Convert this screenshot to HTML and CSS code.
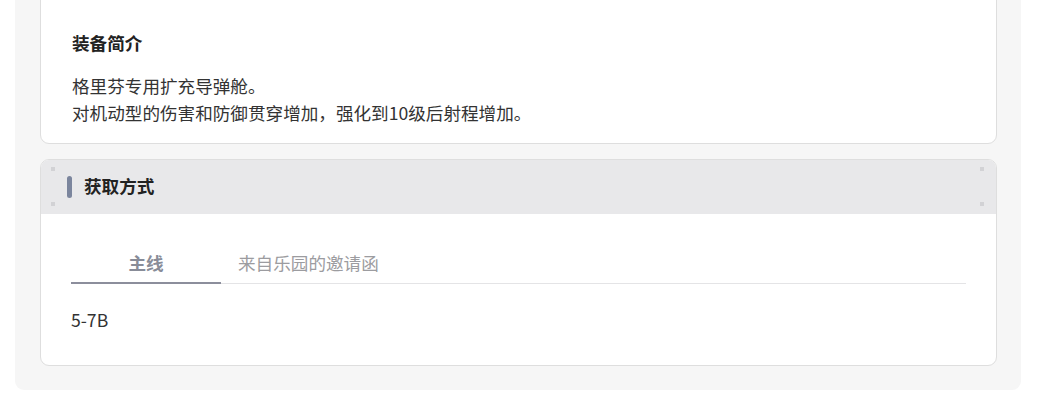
FILE: index.html
```html
<!DOCTYPE html>
<html lang="zh-CN">
<head>
<meta charset="utf-8">
<title>装备</title>
<link rel="stylesheet" href="styles.css">
</head>
<body>
<div class="page">
  <section class="card intro">
    <h3 class="intro-title">装备简介</h3>
    <p class="intro-text">格里芬专用扩充导弹舱。<br>对机动型的伤害和防御贯穿增加，强化到10级后射程增加。</p>
  </section>
  <section class="card source">
    <header class="source-head">
      <span class="dot dot-tl"></span>
      <span class="dot dot-bl"></span>
      <span class="dot dot-tr"></span>
      <span class="dot dot-br"></span>
      <span class="bar"></span>
      <h3 class="source-title">获取方式</h3>
    </header>
    <div class="source-body">
      <div class="tabs">
        <div class="tab active">主线</div>
        <div class="tab">来自乐园的邀请函</div>
      </div>
      <div class="tab-panel">5-7B</div>
    </div>
  </section>
</div>
</body>
</html>
```

FILE: styles.css
```css
* { box-sizing: border-box; }
html, body { margin: 0; padding: 0; background: #ffffff; }
body {
  font-family: "Noto Sans CJK SC", "Noto Sans", sans-serif;
  font-size: 17.6px;
  color: #333333;
  overflow: hidden;
}
.page {
  margin: -12px 21px 0 15px;
  padding: 0 24px 24px 25px;
  background: #f6f6f6;
  border-radius: 0 0 9px 9px;
}
.card {
  background: #ffffff;
  border: 1px solid #dedede;
  border-radius: 9px;
}
.intro {
  padding: 40px 30px 17px 31px;
}
.intro-title {
  margin: 0;
  font-size: 17.6px;
  line-height: 27px;
  font-weight: 700;
  color: #222222;
}
.intro-text {
  margin: 16px 0 0;
  line-height: 27px;
  color: #333333;
}
.source {
  margin-top: 15px;
  overflow: hidden;
}
.source-head {
  position: relative;
  height: 54px;
  background: #e8e8ea;
  display: flex;
  align-items: center;
  padding-left: 26px;
  gap: 12px;
}
.dot {
  position: absolute;
  width: 4px;
  height: 4px;
  background: #d2d2d5;
}
.dot-tl { left: 10px; top: 7px; }
.dot-bl { left: 10px; bottom: 8px; }
.dot-tr { right: 12px; top: 7px; }
.dot-br { right: 12px; bottom: 8px; }
.bar {
  width: 5px;
  height: 22px;
  border-radius: 3px;
  background: #7b859d;
}
.source-title {
  margin: 0;
  padding-bottom: 4px;
  font-size: 17.6px;
  line-height: 27px;
  font-weight: 700;
  color: #222222;
}
.source-body {
  padding: 30px 30px 32px;
}
.tabs {
  display: flex;
  border-bottom: 1px solid #e4e4e6;
}
.tab {
  min-width: 150px;
  padding: 5px 17px 6px;
  margin-bottom: -1px;
  line-height: 27px;
  text-align: center;
  color: #9c9ca0;
  border-bottom: 2px solid transparent;
}
.tab.active {
  font-weight: 700;
  color: #888c98;
  border-bottom-color: #8c8e9c;
}
.tab-panel {
  margin-top: 22px;
  line-height: 27px;
  color: #333333;
}
```
